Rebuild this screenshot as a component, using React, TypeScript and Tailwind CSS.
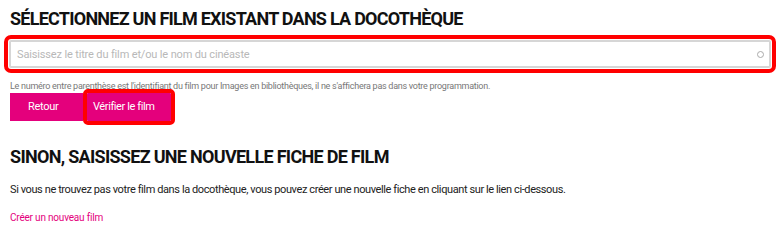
export default function App() {
  return (
    <div className="min-h-screen bg-white px-[10px] pt-[9px] font-['Roboto',sans-serif] text-[#111]">
      <h1 className="text-[18px] font-bold leading-[20px] tracking-[-0.75px] whitespace-nowrap">
        SÉLECTIONNEZ UN FILM EXISTANT DANS LA DOCOTHÈQUE
      </h1>

      <div className="mt-[11px] ml-[-1px] mr-[-3px] flex h-[28px] items-center rounded-[2px] border-2 border-[#d6d6d6] bg-white pl-[6px] pr-[5px] outline-4 outline-offset-1 outline-[#ff0000]">
        <input
          className="h-full flex-1 bg-transparent text-[11px] tracking-[-0.15px] text-[#333] placeholder:text-[#b8b8b8] focus:outline-none"
          placeholder="Saisissez le titre du film et/ou le nom du cinéaste"
        />
        <span className="h-[7px] w-[7px] rounded-full border-[1.5px] border-[#aaa]" />
      </div>

      <p className="mt-[12px] text-[9px] leading-[12px] tracking-[-0.27px] text-[#777] whitespace-nowrap">
        Le numéro entre parenthèse est l'identifiant du film pour Images en bibliothèques, il ne s'affichera pas dans votre programmation.
      </p>

      <div className="mt-[1px] flex gap-[4px]">
        <button className="h-[28px] w-[73px] bg-[#e4007c] pl-[18px] text-left text-[11px] tracking-[-0.3px] text-white">
          Retour
        </button>
        <button className="h-[28px] w-[84px] rounded-[1px] bg-[#e4007c] pl-[6px] text-left text-[11px] tracking-[-0.4px] text-white outline-4 outline-[#ff0000]">
          Vérifier le film
        </button>
      </div>

      <h2 className="mt-[26px] text-[18px] font-bold leading-[20px] tracking-[-0.7px] whitespace-nowrap">
        SINON, SAISISSEZ UNE NOUVELLE FICHE DE FILM
      </h2>

      <p className="mt-[15px] text-[11px] leading-[16px] tracking-[-0.4px] text-[#222] whitespace-nowrap">
        Si vous ne trouvez pas votre film dans la docothèque, vous pouvez créer une nouvelle fiche en cliquant sur le lien ci-dessous.
      </p>

      <a href="#" className="mt-[12px] block text-[10px] leading-[16px] tracking-[-0.2px] text-[#e4007c]">
        Créer un nouveau film
      </a>
    </div>
  )
}
